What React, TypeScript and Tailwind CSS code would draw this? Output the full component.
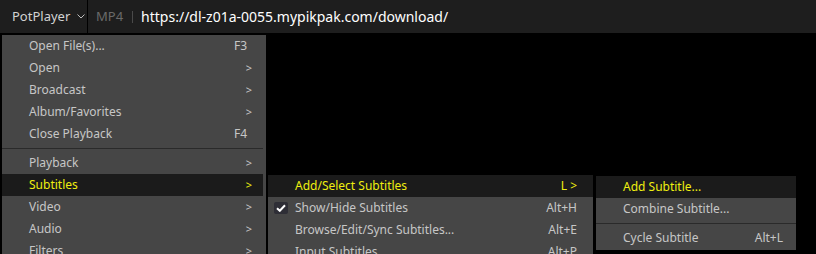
// PotPlayer context menu with nested subtitle submenus
type Item =
  | { kind: 'sep' }
  | { kind: 'item'; label: string; hint?: string; arrow?: boolean; active?: boolean; checked?: boolean };

const mainItems: Item[] = [
  { kind: 'item', label: 'Open File(s)...', hint: 'F3' },
  { kind: 'item', label: 'Open', arrow: true },
  { kind: 'item', label: 'Broadcast', arrow: true },
  { kind: 'item', label: 'Album/Favorites', arrow: true },
  { kind: 'item', label: 'Close Playback', hint: 'F4' },
  { kind: 'sep' },
  { kind: 'item', label: 'Playback', arrow: true },
  { kind: 'item', label: 'Subtitles', arrow: true, active: true },
  { kind: 'item', label: 'Video', arrow: true },
  { kind: 'item', label: 'Audio', arrow: true },
  { kind: 'item', label: 'Filters', arrow: true },
];

const subItems: Item[] = [
  { kind: 'item', label: 'Add/Select Subtitles', hint: 'L >', active: true },
  { kind: 'item', label: 'Show/Hide Subtitles', hint: 'Alt+H', checked: true },
  { kind: 'item', label: 'Browse/Edit/Sync Subtitles...', hint: 'Alt+E' },
  { kind: 'item', label: 'Input Subtitles', hint: 'Alt+P' },
];

const addItems: Item[] = [
  { kind: 'item', label: 'Add Subtitle...', active: true },
  { kind: 'item', label: 'Combine Subtitle...' },
  { kind: 'sep' },
  { kind: 'item', label: 'Cycle Subtitle', hint: 'Alt+L' },
];

function Check() {
  return (
    <span className="absolute left-[6px] top-[5px] w-[14px] h-[12px] rounded-[2px] bg-[#2e2e36] flex items-center justify-center">
      <svg width="10" height="8" viewBox="0 0 10 8" fill="none">
        <path d="M1 4.2 L3.8 6.8 L9 1.2" stroke="#ffffff" strokeWidth="2" />
      </svg>
    </span>
  );
}

function MenuList({ items, textLeft, hintRight }: { items: Item[]; textLeft: number; hintRight: string }) {
  return (
    <>
      {items.map((it, i) =>
        it.kind === 'sep' ? (
          <div key={i} className="h-[7px] flex items-center">
            <div className="w-full h-px bg-[#2a2a2a]" />
          </div>
        ) : (
          <div
            key={i}
            className={`relative h-[22px] flex items-center ${it.active ? 'bg-[#1b1b1b] text-[#efef10]' : 'text-[#c6c6c6]'}`}
            style={{ paddingLeft: textLeft }}
          >
            {it.checked && <Check />}
            <span className="flex-1">{it.label}</span>
            {it.hint && <span className={hintRight}>{it.hint}</span>}
            {it.arrow && <span className="pr-[11px] text-[11px]">&gt;</span>}
          </div>
        )
      )}
    </>
  );
}

export default function App() {
  return (
    <div
      className="relative w-[816px] h-[254px] bg-black overflow-hidden text-[12px]"
      style={{ fontFamily: '"Noto Sans", "Open Sans", sans-serif' }}
    >
      <div className="h-[33px] bg-[#1e1e1e] flex items-center">
        <div className="h-full w-[88px] flex items-center pl-[12px] gap-[7px] text-[#d2d2d2] text-[13px] border-r border-black">
          <span>PotPlayer</span>
          <svg width="8" height="5" viewBox="0 0 8 5" fill="none">
            <path d="M0.5 0.5 L4 4 L7.5 0.5" stroke="#bdbdbd" strokeWidth="1" />
          </svg>
        </div>
        <span className="ml-[8px] text-[#6a6a6a] text-[13px]">MP4</span>
        <span className="ml-[9px] w-px h-[12px] bg-[#4a4a4a]" />
        <span className="ml-[8px] text-white text-[14px]">https://dl-z01a-0055.mypikpak.com/download/</span>
      </div>

      <div className="absolute left-[2px] top-[35px] w-[264px] bg-[#464646] border-r-[3px] border-[#464646]">
        <MenuList items={mainItems} textLeft={27} hintRight="pr-[16px]" />
      </div>

      <div className="absolute left-[268px] top-[175px] w-[325px] bg-[#464646]">
        <MenuList items={subItems} textLeft={27} hintRight="pr-[16px]" />
      </div>

      <div className="absolute left-[596px] top-[176px] w-[200px] bg-[#464646] pb-[1px]">
        <MenuList items={addItems} textLeft={27} hintRight="pr-[13px]" />
      </div>
    </div>
  );
}
